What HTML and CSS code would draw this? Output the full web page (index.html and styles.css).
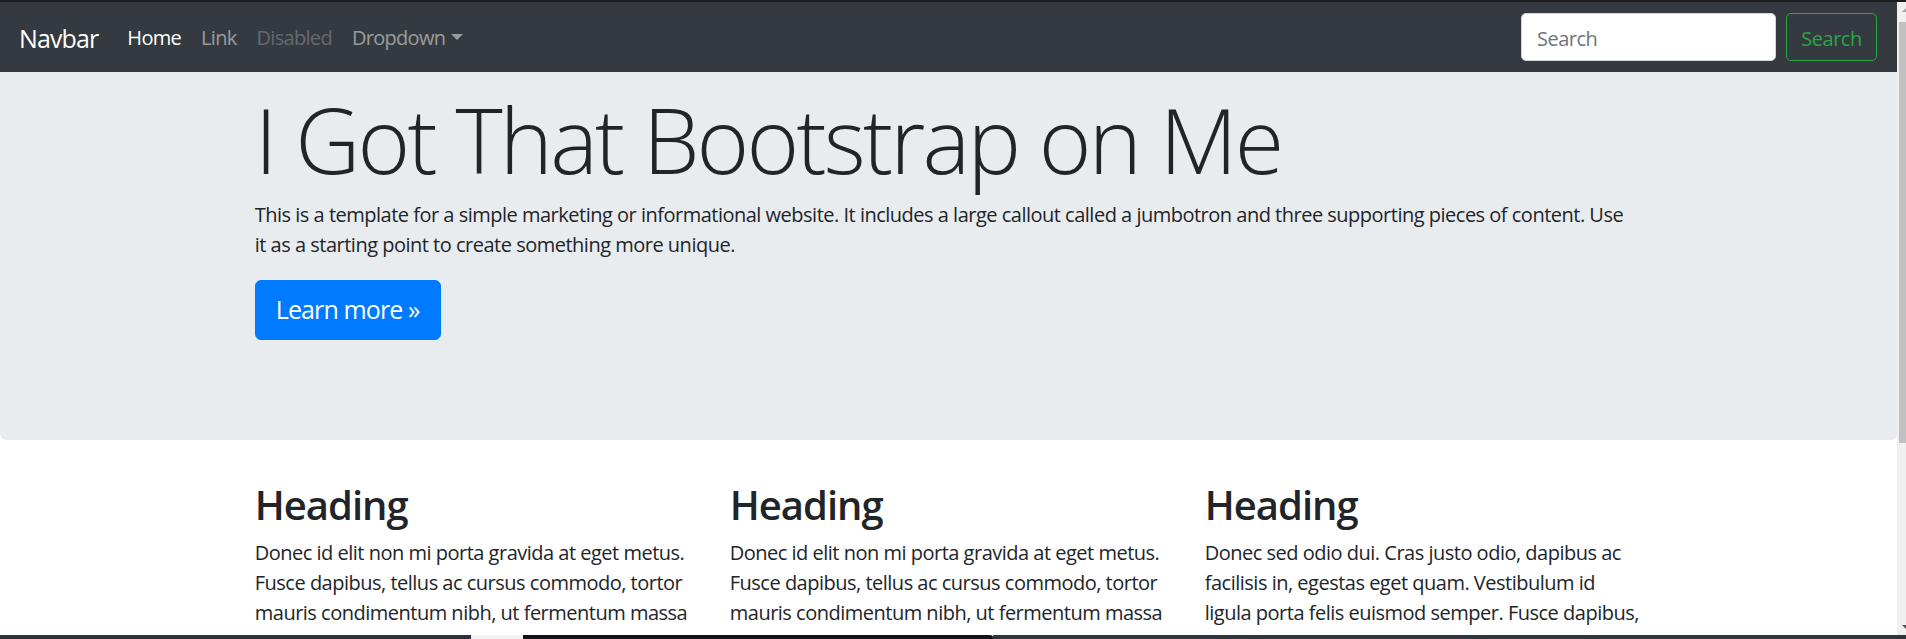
FILE: index.html
```html
<!DOCTYPE html>
<html lang="en">
<head>
<meta charset="utf-8">
<title>Jumbotron</title>
<link rel="stylesheet" href="styles.css">
</head>
<body>
<div class="topline"></div>
<div class="screen">
  <div class="page">
    <nav class="navbar">
      <a class="brand" href="#">Navbar</a>
      <ul class="nav">
        <li><a class="nav-link active" href="#">Home</a></li>
        <li><a class="nav-link" href="#">Link</a></li>
        <li><a class="nav-link disabled" href="#">Disabled</a></li>
        <li><a class="nav-link dropdown" href="#">Dropdown<span class="caret"></span></a></li>
      </ul>
      <form class="search">
        <input class="search-input" type="text" placeholder="Search">
        <button class="search-btn" type="button">Search</button>
      </form>
    </nav>
    <main>
      <div class="jumbotron">
        <div class="container">
          <h1 class="display">I Got That Bootstrap on Me</h1>
          <p class="intro">This is a template for a simple marketing or informational website. It includes a large callout called a jumbotron and three supporting pieces of content. Use it as a starting point to create something more unique.</p>
          <div class="actions"><a class="btn-primary" href="#">Learn more &raquo;</a></div>
        </div>
      </div>
      <div class="container cols">
        <div class="row">
          <div class="col">
            <h2>Heading</h2>
            <p>Donec id elit non mi porta gravida at eget metus. Fusce dapibus, tellus ac cursus commodo, tortor mauris condimentum nibh, ut fermentum massa justo sit amet risus. Etiam porta sem malesuada magna mollis euismod. Donec sed odio dui.</p>
          </div>
          <div class="col">
            <h2>Heading</h2>
            <p>Donec id elit non mi porta gravida at eget metus. Fusce dapibus, tellus ac cursus commodo, tortor mauris condimentum nibh, ut fermentum massa justo sit amet risus. Etiam porta sem malesuada magna mollis euismod. Donec sed odio dui.</p>
          </div>
          <div class="col">
            <h2>Heading</h2>
            <p>Donec sed odio dui. Cras justo odio, dapibus ac facilisis in, egestas eget quam. Vestibulum id ligula porta felis euismod semper. Fusce dapibus, tellus ac cursus commodo, tortor mauris condimentum nibh, ut fermentum massa justo sit amet risus.</p>
          </div>
        </div>
      </div>
    </main>
  </div>
  <div class="scrollbar">
    <div class="sb-arrow"><svg width="9" height="20" viewBox="0 0 9 20"><polygon points="5,10 9,6 9,10" fill="#a3a3a3"/></svg></div>
    <div class="sb-thumb"></div>
    <div class="sb-space"></div>
    <div class="sb-arrow down"><svg width="9" height="14" viewBox="0 0 9 14"><polygon points="5,4 9,4 9,8" fill="#505050"/></svg></div>
  </div>
</div>
<div class="taskbar">
  <span class="seg seg-a"></span>
  <span class="seg seg-b"></span>
  <span class="seg seg-c"></span>
  <span class="seg seg-d"></span>
</div>
</body>
</html>
```

FILE: styles.css
```css
* { box-sizing: border-box; }

html, body {
  margin: 0;
  padding: 0;
  height: 639px;
  overflow: hidden;
  background: #ffffff;
}

body {
  display: flex;
  flex-direction: column;
  font-family: "Open Sans", "Noto Sans", sans-serif;
  font-size: 20px;
  line-height: 30px;
  color: #212529;
  letter-spacing: -0.025em;
}

.topline {
  height: 2px;
  background: #1c1d20;
  flex: none;
}

.screen {
  flex: 1;
  display: flex;
  min-height: 0;
}

.page {
  flex: 1;
  min-width: 0;
  overflow: hidden;
  background: #fff;
}

/* Navbar */
.navbar {
  height: 70px;
  background: #343a40;
  display: flex;
  align-items: center;
  padding: 0 20px 0 19px;
}

.brand {
  font-size: 25px;
  line-height: 37.5px;
  color: #fff;
  text-decoration: none;
  margin-right: 19px;
  padding: 3px 0 0 0;
  letter-spacing: -0.035em;
}

.nav {
  list-style: none;
  margin: 0;
  padding: 2px 0 0;
  display: flex;
}

.nav-link {
  display: block;
  padding: 10px 10px;
  color: rgba(255, 255, 255, 0.5);
  text-decoration: none;
  font-size: 20px;
  line-height: 30px;
  letter-spacing: -0.035em;
}

.nav-link.active { color: #fff; }
.nav-link.disabled { color: rgba(255, 255, 255, 0.25); }

.caret {
  display: inline-block;
  margin-left: 6px;
  vertical-align: 5px;
  border-top: 6px solid rgba(255, 255, 255, 0.5);
  border-left: 6px solid transparent;
  border-right: 6px solid transparent;
}

.search {
  margin: 0 0 0 auto;
  display: flex;
  gap: 10px;
}

.search-input {
  width: 255px;
  height: 48px;
  padding: 8px 15px 6px;
  font-family: inherit;
  font-size: 20px;
  letter-spacing: -0.025em;
  color: #495057;
  background: #fff;
  border: 1px solid #ced4da;
  border-radius: 5px;
  outline: none;
}

.search-input::placeholder { color: #6c757d; }

.search-btn {
  width: 91px;
  height: 48px;
  padding: 2px 0 0;
  font-family: inherit;
  font-size: 20px;
  letter-spacing: -0.025em;
  color: #28a745;
  background: transparent;
  border: 1px solid #28a745;
  border-radius: 5px;
}

/* Jumbotron */
.jumbotron {
  background: #e9ecef;
  padding: 13px 0 80px;
  border-radius: 0 0 6px 6px;
}

.container {
  width: 1425px;
  margin: 0 auto;
  padding: 0 18.75px;
}

.display {
  font-size: 90px;
  font-weight: 300;
  line-height: 108px;
  margin: 0 0 7px;
  letter-spacing: -0.031em;
}

.intro {
  margin: 0 0 20px;
  max-width: 1376px;
}

.actions {
  display: flex;
  margin-bottom: 20px;
}

.btn-primary {
  display: inline-block;
  font-size: 25px;
  line-height: 37.5px;
  padding: 10px 20px;
  border: 1px solid #007bff;
  border-radius: 6px;
  background: #007bff;
  color: #fff;
  text-decoration: none;
  letter-spacing: -0.035em;
}

/* Columns */
.cols {
  margin-top: 41px;
}

.row {
  display: flex;
  margin: 0 -18.75px;
}

.col {
  width: 475px;
  flex: none;
  padding: 0 18.75px;
}

.col h2 {
  font-size: 40px;
  font-weight: 600;
  line-height: 48px;
  margin: 0 0 9px;
  letter-spacing: -0.025em;
}

.col p {
  margin: 0;
}

/* Fake scrollbar */
.scrollbar {
  width: 9px;
  flex: none;
  background: #f0f0f0;
  display: flex;
  flex-direction: column;
  overflow: hidden;
}

.sb-arrow {
  height: 20px;
  flex: none;
}

.sb-arrow svg { display: block; }

.sb-arrow.down { height: 14px; }

.sb-thumb {
  height: 421px;
  margin-left: 2px;
  background: #c1c1c1;
  flex: none;
}

.sb-space { flex: 1; }

/* Taskbar strip */
.taskbar {
  height: 4px;
  flex: none;
  display: flex;
}

.seg { display: block; height: 100%; }
.seg-a { width: 471px; background: #2d3139; }
.seg-b { width: 52px; background: #f2f2f2; }
.seg-c { width: 470px; background: #111217; border-top-right-radius: 3px; }
.seg-d { flex: 1; background: #30343c; }
```
